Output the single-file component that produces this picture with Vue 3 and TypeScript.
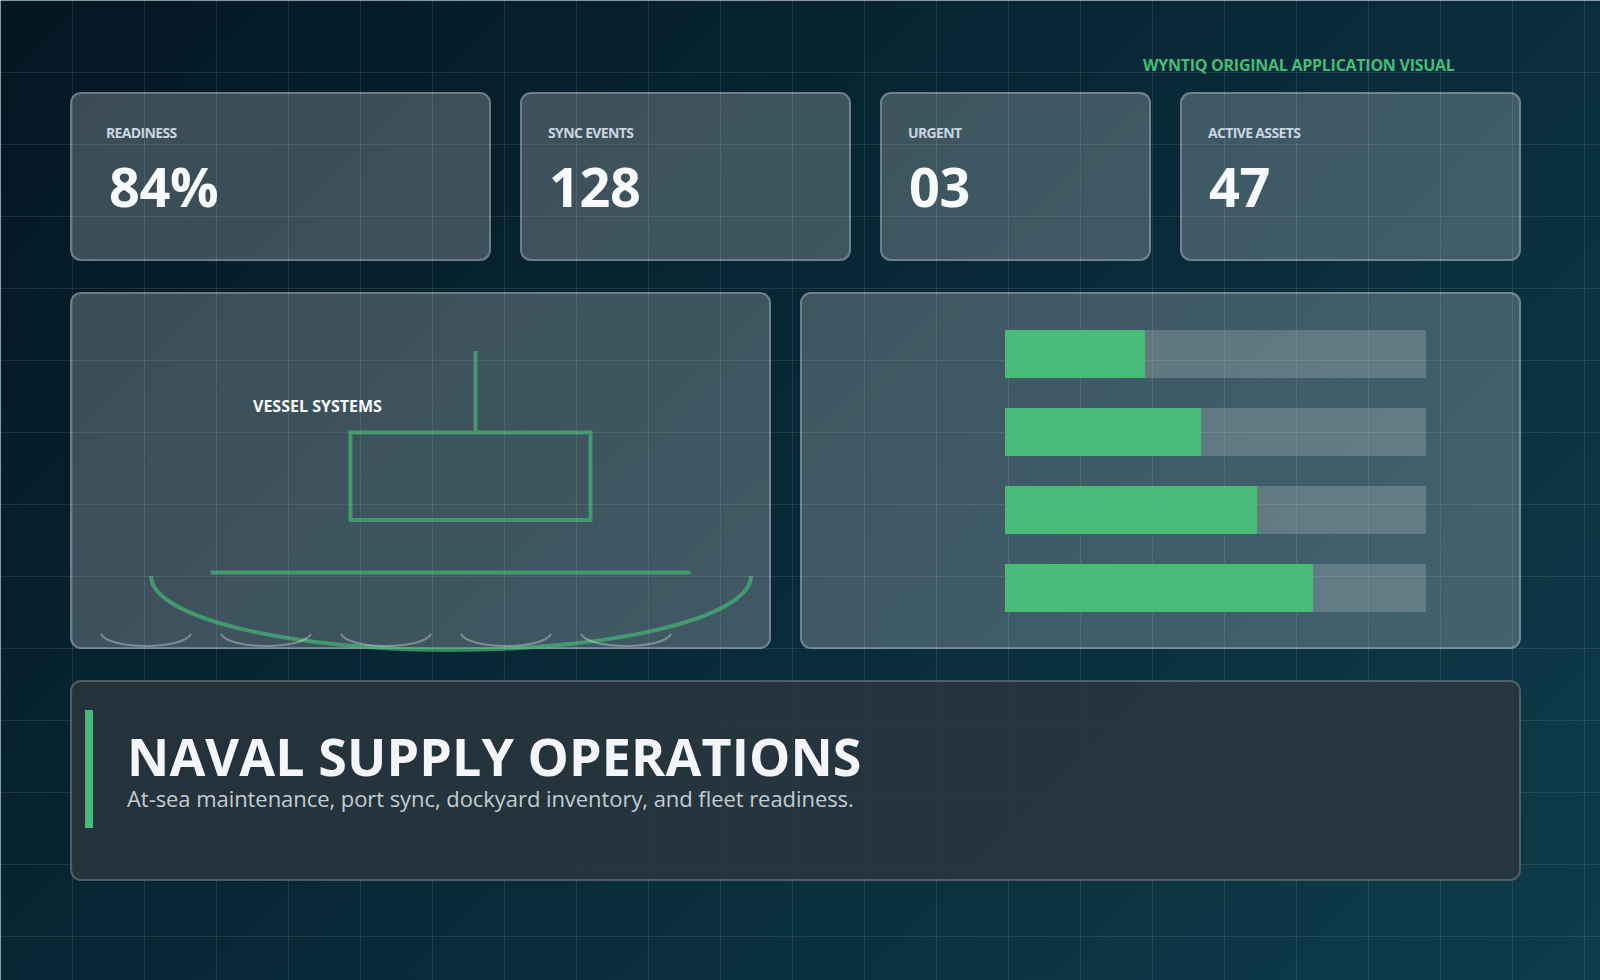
<script setup lang="ts">
const stats = [
  { label: 'READINESS', value: '84%', wide: true },
  { label: 'SYNC EVENTS', value: '128', wide: false },
  { label: 'URGENT', value: '03', wide: false },
  { label: 'ACTIVE ASSETS', value: '47', wide: false },
];

const bars = [140, 196, 252, 308];
const waves = [101, 221, 341, 461, 581];
</script>

<template>
  <div class="page">
    <div class="tag">WYNTIQ ORIGINAL APPLICATION VISUAL</div>

    <div class="stats">
      <div v-for="s of stats" :key="s.label" class="panel stat" :class="{ wide: s.wide }">
        <div class="stat-label">{{ s.label }}</div>
        <div class="stat-value">{{ s.value }}</div>
      </div>
    </div>

    <div class="middle">
      <div class="panel vessel">
        <svg class="vessel-art" width="701" height="357" viewBox="70 292 701 357">
          <g class="ship">
            <path class="hull" d="M151 576 A300 74 0 0 0 751 576" />
            <line x1="210.5" y1="572.5" x2="690.5" y2="572.5" />
            <rect x="350.5" y="432.5" width="240" height="87.5" />
            <line x1="475.5" y1="351" x2="475.5" y2="432" />
          </g>
          <path
            v-for="x of waves"
            :key="x"
            class="wave"
            :d="`M${x} 634 C${x + 8} 650 ${x + 82} 650 ${x + 90} 634`"
          />
        </svg>
        <div class="vessel-title">VESSEL SYSTEMS</div>
      </div>

      <div class="panel chart">
        <div v-for="w of bars" :key="w" class="track">
          <div class="fill" :style="{ width: w + 'px' }"></div>
        </div>
      </div>
    </div>

    <div class="panel-dark">
      <div class="accent"></div>
      <div class="headline">
        <h1>NAVAL SUPPLY OPERATIONS</h1>
        <p>At-sea maintenance, port sync, dockyard inventory, and fleet readiness.</p>
      </div>
    </div>
  </div>
</template>

<style>
html,
body {
  margin: 0;
  background: #062433;
}
</style>

<style scoped>
.page {
  box-sizing: border-box;
  width: 1600px;
  height: 980px;
  overflow: hidden;
  padding: 54px 79px 0 70px;
  font-family: 'Open Sans', 'Noto Sans', sans-serif;
  background-color: #062433;
  background-image:
    linear-gradient(rgba(255, 255, 255, 0.5), rgba(255, 255, 255, 0.5)),
    linear-gradient(rgba(255, 255, 255, 0.5), rgba(255, 255, 255, 0.5)),
    linear-gradient(rgba(255, 255, 255, 0.09) 1px, transparent 1px),
    linear-gradient(90deg, rgba(255, 255, 255, 0.09) 1px, transparent 1px),
    linear-gradient(135deg, #041723 0%, #0e3c4c 100%);
  background-size:
    100% 1px,
    1px 100%,
    72px 72px,
    72px 72px,
    100% 100%;
  background-repeat: no-repeat, no-repeat, repeat, repeat, no-repeat;
}

.tag {
  height: 22px;
  line-height: 22px;
  margin-bottom: 16px;
  padding-left: 1073px;
  font-size: 16px;
  font-weight: 700;
  letter-spacing: -0.26px;
  white-space: nowrap;
  color: #48bb78;
}

.stats {
  display: grid;
  grid-template-columns: 421px 331px 271px 341px;
  gap: 29px;
}

.panel {
  box-sizing: border-box;
  position: relative;
  border: 2px solid rgba(255, 255, 255, 0.26);
  border-radius: 11px;
  background: rgba(255, 255, 255, 0.22);
}

.stat {
  height: 169px;
  padding: 29px 0 0 26px;
}

.stat.wide {
  padding-left: 34px;
}

.stat.wide .stat-value {
  margin-left: 3px;
}

.stat-label {
  height: 20px;
  line-height: 20px;
  font-size: 14px;
  font-weight: 700;
  letter-spacing: -0.65px;
  color: #cbd5e0;
}

.stat-value {
  margin-top: 10px;
  margin-left: 1px;
  line-height: 66px;
  font-size: 54px;
  font-weight: 700;
  letter-spacing: -0.4px;
  color: #f7fafc;
}

.middle {
  display: grid;
  grid-template-columns: 701px 721px;
  gap: 29px;
  margin-top: 31px;
}

.vessel {
  height: 357px;
}

.vessel-art {
  position: absolute;
  left: -2px;
  top: -2px;
  overflow: visible;
}

.ship {
  fill: none;
  stroke: #48bb78;
  stroke-width: 4;
  opacity: 0.66;
}

.wave {
  fill: none;
  stroke: rgba(255, 255, 255, 0.33);
  stroke-width: 2;
}

.vessel-title {
  position: absolute;
  left: 181px;
  top: 101px;
  font-size: 16px;
  line-height: 22px;
  font-weight: 700;
  white-space: nowrap;
  color: #f7fafc;
}

.chart {
  height: 357px;
  padding: 36px 0 0 203px;
  display: flex;
  flex-direction: column;
  gap: 30px;
}

.track {
  width: 421px;
  height: 48px;
  background: rgba(255, 255, 255, 0.18);
}

.fill {
  height: 100%;
  background: #48bb78;
}

.panel-dark {
  box-sizing: border-box;
  display: flex;
  align-items: flex-start;
  height: 201px;
  margin-top: 31px;
  padding: 28px 0 0 12px;
  border: 2px solid rgba(255, 255, 255, 0.2);
  border-radius: 11px;
  background: rgba(44, 54, 62, 0.82);
}

.accent {
  flex: none;
  width: 8px;
  height: 118px;
  margin-left: 0.5px;
  background: #48bb78;
}

.headline {
  margin-left: 33.5px;
}

h1 {
  margin: 0 0 0 1px;
  height: 58px;
  line-height: 58px;
  padding-top: 17px;
  font-size: 52px;
  font-weight: 700;
  letter-spacing: 0.1px;
  white-space: nowrap;
  color: #f3f5f8;
}

p {
  margin: 1px 0 0 1px;
  line-height: 24px;
  font-size: 22px;
  letter-spacing: -0.06px;
  white-space: nowrap;
  color: #c4ccd4;
}
</style>
